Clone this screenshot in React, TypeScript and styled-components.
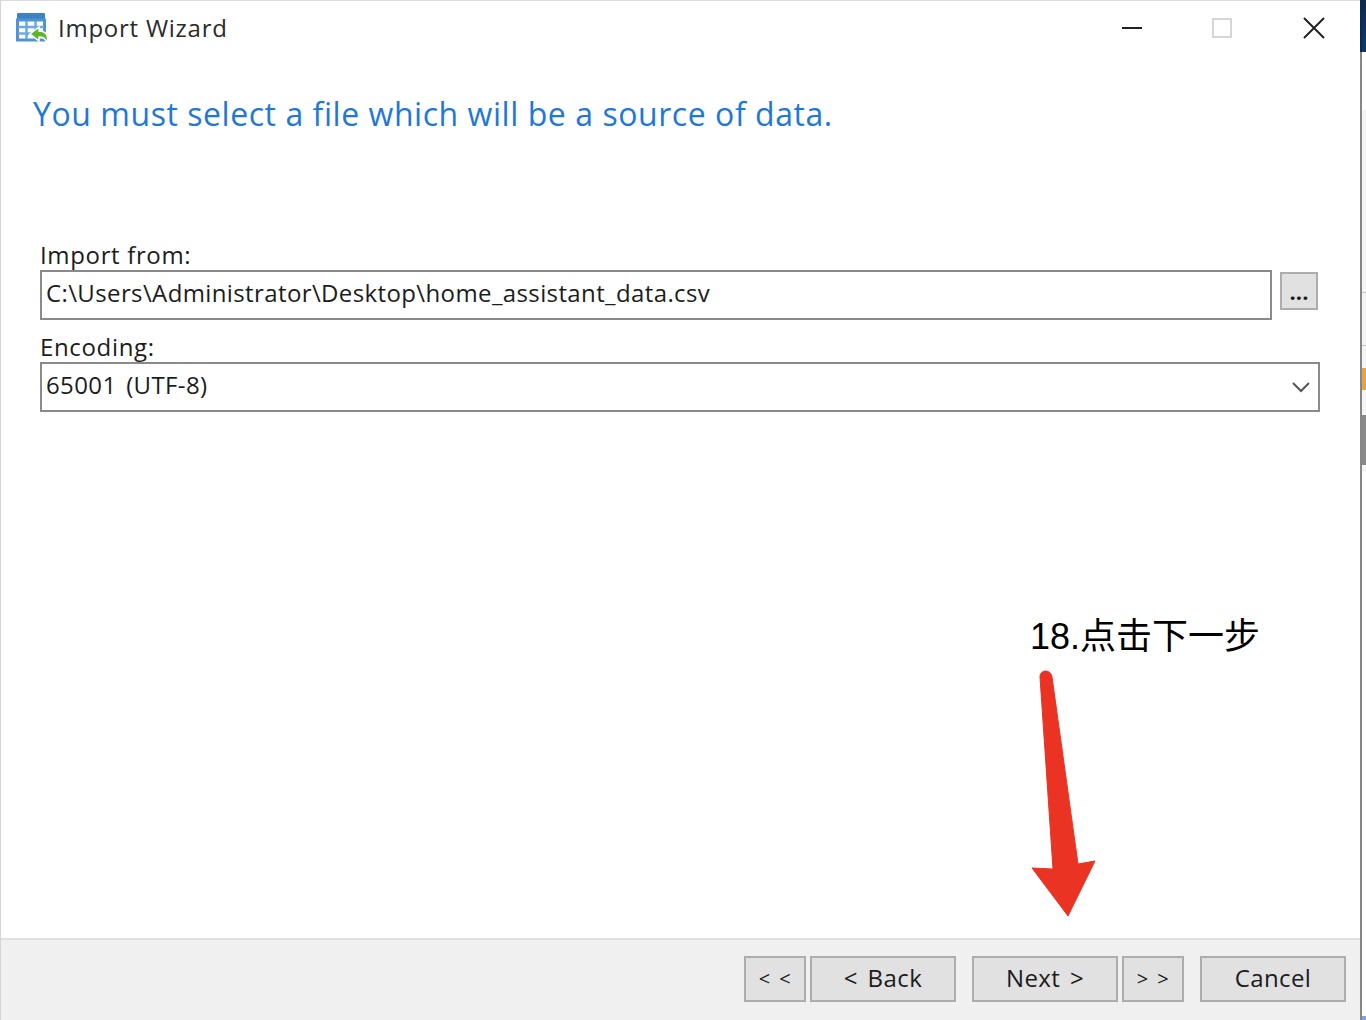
import { createGlobalStyle } from 'styled-components';
import styled from 'styled-components';

const GlobalStyle = createGlobalStyle`
    html, body {
        margin: 0;
        padding: 0;
        background: #fff;
    }
`;

const Screen = styled.div`
    position: relative;
    display: flex;
    width: 1366px;
    height: 1020px;
    overflow: hidden;
    font-family: "Open Sans", "Noto Sans", sans-serif;
    color: #1c1c1c;
`;

const Window = styled.div`
    display: flex;
    flex-direction: column;
    width: 1360px;
    height: 1020px;
    box-sizing: border-box;
    border-top: 1px solid #dcdcdc;
    border-left: 1px solid #d4d4d4;
    background: #fff;
`;

const DesktopEdge = styled.div`
    display: flex;
    flex-direction: column;
    width: 6px;
`;

const EdgeBlock = styled.div<{ $h: number; $bg: string; $line?: string }>`
    height: ${({ $h }) => $h}px;
    background: ${({ $bg }) => $bg};
    border-left: 2px solid ${({ $line }) => $line ?? '#868686'};
`;

const TitleBar = styled.div`
    display: flex;
    align-items: center;
    height: 53px;
    padding-left: 15px;
    flex: none;
`;

const TitleText = styled.span`
    margin-left: 8px;
    font-size: 24px;
    color: #2a2a2a;
    letter-spacing: 0.75px;
`;

const WindowButtons = styled.div`
    display: flex;
    align-items: center;
    margin-left: auto;
    margin-right: 1px;
`;

const WindowButton = styled.div<{ $gap?: number }>`
    display: flex;
    align-items: center;
    justify-content: center;
    width: 90px;
    height: 53px;
    margin-left: ${({ $gap }) => $gap ?? 0}px;
`;

const Heading = styled.h1`
    margin: 38px 0 0 32px;
    font-size: 32px;
    line-height: 44px;
    font-weight: 400;
    letter-spacing: 0.55px;
    color: #1f78d8;
    flex: none;
`;

const Form = styled.div`
    display: flex;
    flex-direction: column;
    margin: 103px 40px 0 39px;
    flex: none;
`;

const FieldLabel = styled.label<{ $top?: number; $h: number; $lh: number }>`
    font-size: 24px;
    line-height: ${({ $lh }) => $lh}px;
    height: ${({ $h }) => $h}px;
    margin-top: ${({ $top }) => $top ?? 0}px;
    letter-spacing: 0.65px;
`;

const FileRow = styled.div`
    display: flex;
    align-items: flex-start;
    gap: 8px;
`;

const Field = styled.div`
    display: flex;
    align-items: center;
    flex: 1 1 auto;
    height: 50px;
    box-sizing: border-box;
    border: 2px solid #8a8a8a;
    padding: 0 0 5px 4px;
    font-size: 24px;
    letter-spacing: 0.38px;
    word-spacing: 3px;
    white-space: pre;
`;

const Chevron = styled.svg`
    margin-left: auto;
    margin-right: 8px;
    margin-top: 5px;
`;

const BrowseButton = styled.div`
    display: flex;
    align-items: center;
    justify-content: center;
    flex: none;
    width: 38px;
    height: 38px;
    margin: 2px 2px 0 0;
    box-sizing: border-box;
    border: 2px solid #adadad;
    background: #e1e1e1;
    font-size: 22px;
    line-height: 20px;
    font-weight: 700;
`;

const Spacer = styled.div`
    flex: 1;
`;

const Footer = styled.div`
    display: flex;
    align-items: center;
    justify-content: flex-end;
    flex: none;
    height: 82px;
    box-sizing: border-box;
    border-top: 2px solid #dfdfdf;
    background: #f0f0f0;
    padding: 0 14px 2px 0;
`;

const FootButton = styled.div<{ $w: number; $gapLeft?: number; $small?: boolean }>`
    display: flex;
    align-items: center;
    justify-content: center;
    width: ${({ $w }) => $w}px;
    height: 46px;
    margin-left: ${({ $gapLeft }) => $gapLeft ?? 0}px;
    box-sizing: border-box;
    border: 2px solid #adadad;
    background: #e1e1e1;
    font-size: ${({ $small }) => ($small ? 20 : 24)}px;
    letter-spacing: 0.4px;
    word-spacing: 3px;
    padding-bottom: ${({ $small }) => ($small ? 2 : 4)}px;
    white-space: pre;
`;

const Annotation = styled.div`
    position: absolute;
    left: 1030px;
    top: 613px;
    font-family: "Liberation Sans", "Noto Sans CJK SC", sans-serif;
    font-size: 36px;
    line-height: 48px;
    color: #000;
    white-space: nowrap;
`;

const Arrow = styled.svg`
    position: absolute;
    left: 1025px;
    top: 665px;
`;

function ImportIcon() {
    return (
        <svg width="34" height="31" viewBox="0 0 34 31">
            <path d="M1 2a1 1 0 0 1 1-1h26a1 1 0 0 1 1 1v8H1z" fill="#3b82c6" />
            <rect x="1.5" y="8" width="27" height="20" fill="#fff" stroke="#4f93d3" strokeWidth="3" />
            <path d="M10.5 9v18M19.5 9v18M2 15h26M2 21.5h26" stroke="#6ea8de" strokeWidth="2.5" fill="none" />
            <path d="M23 15l-9 7 9 7v-4c4 0 6 1 8 6 2-7-1-12-8-12z" fill="#5fb52a" stroke="#fff" strokeWidth="1.5" />
        </svg>
    );
}

export default function App() {
    return (
        <Screen>
            <GlobalStyle />
            <Window>
                <TitleBar>
                    <ImportIcon />
                    <TitleText>Import Wizard</TitleText>
                    <WindowButtons>
                        <WindowButton>
                            <svg width="22" height="4" viewBox="0 0 22 4"><path d="M1 2h20" stroke="#222" strokeWidth="2" /></svg>
                        </WindowButton>
                        <WindowButton>
                            <svg width="20" height="20" viewBox="0 0 20 20"><rect x="1" y="1" width="18" height="18" fill="none" stroke="#d6d6d6" strokeWidth="2" /></svg>
                        </WindowButton>
                        <WindowButton $gap={2}>
                            <svg width="22" height="22" viewBox="0 0 22 22"><path d="M1 1l20 20M21 1L1 21" stroke="#222" strokeWidth="2" /></svg>
                        </WindowButton>
                    </WindowButtons>
                </TitleBar>
                <Heading>You must select a file which will be a source of data.</Heading>
                <Form>
                    <FieldLabel $h={31} $lh={32}>Import from:</FieldLabel>
                    <FileRow>
                        <Field>C:\Users\Administrator\Desktop\home_assistant_data.csv</Field>
                        <BrowseButton>...</BrowseButton>
                    </FileRow>
                    <FieldLabel $h={32} $lh={34} $top={10}>Encoding:</FieldLabel>
                    <Field>
                        65001 (UTF-8)
                        <Chevron width="18" height="12" viewBox="0 0 18 12">
                            <path d="M1 2l8 8 8-8" stroke="#555" strokeWidth="2" fill="none" />
                        </Chevron>
                    </Field>
                </Form>
                <Spacer />
                <Footer>
                    <FootButton $w={62} $small>{'< <'}</FootButton>
                    <FootButton $w={146} $gapLeft={4}>{'< Back'}</FootButton>
                    <FootButton $w={146} $gapLeft={16}>{'Next >'}</FootButton>
                    <FootButton $w={62} $gapLeft={4} $small>{'> >'}</FootButton>
                    <FootButton $w={146} $gapLeft={16}>Cancel</FootButton>
                </Footer>
            </Window>
            <DesktopEdge>
                <EdgeBlock $h={52} $bg="linear-gradient(#0a2a50, #0b3a70)" $line="#0a2a50" />
                <EdgeBlock $h={58} $bg="#fff" />
                <EdgeBlock $h={182} $bg="#f4f4f4" />
                <EdgeBlock $h={1} $bg="#c8c8c8" />
                <EdgeBlock $h={52} $bg="#f4f4f4" />
                <EdgeBlock $h={1} $bg="#c8c8c8" />
                <EdgeBlock $h={22} $bg="#f4f4f4" />
                <EdgeBlock $h={22} $bg="#e8a24a" />
                <EdgeBlock $h={25} $bg="#f4f4f4" />
                <EdgeBlock $h={50} $bg="#888" />
                <EdgeBlock $h={7} $bg="#f4f4f4" />
                <EdgeBlock $h={544} $bg="#fff" />
                <EdgeBlock $h={4} $bg="#7aa6d8" />
            </DesktopEdge>
            <Annotation>18.点击下一步</Annotation>
            <Arrow width="80" height="260" viewBox="0 0 80 260">
                <path d="M15 12c0-8 11-8 12 0L53 199l17-3-27 55-36-48 21 1z" fill="#ea3323" stroke="#ea3323" strokeWidth="1" strokeLinejoin="round" />
            </Arrow>
        </Screen>
    );
}
